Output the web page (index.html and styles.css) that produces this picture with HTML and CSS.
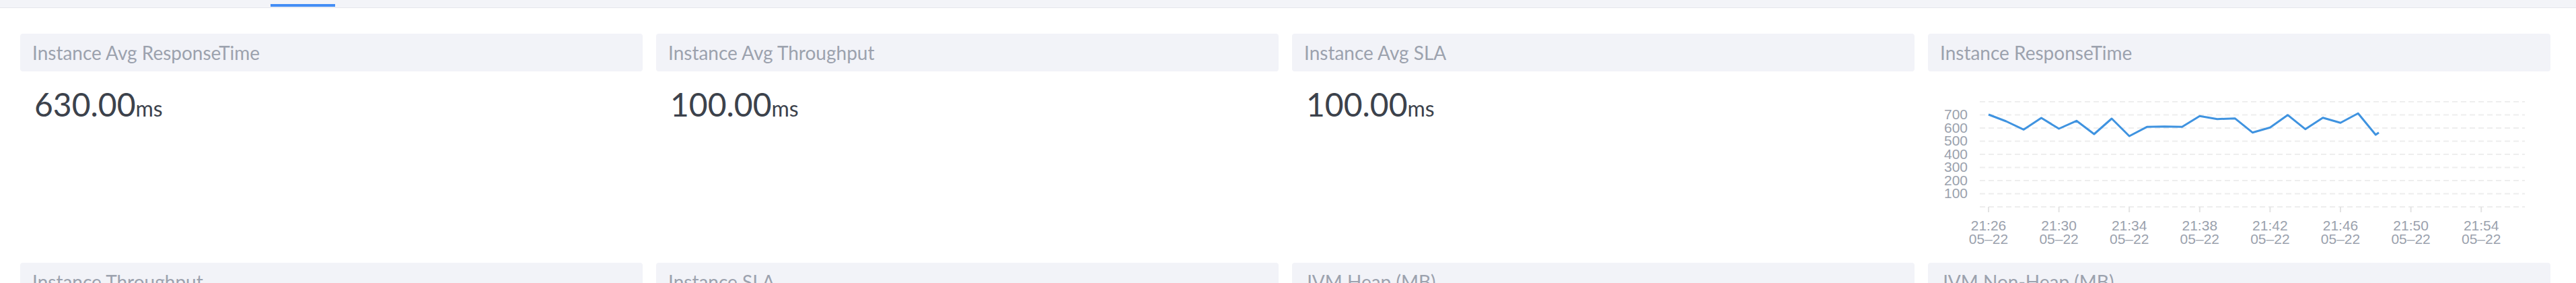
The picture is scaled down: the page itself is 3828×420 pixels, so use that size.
FILE: index.html
```html
<!DOCTYPE html>
<html lang="en">
<head>
<meta charset="utf-8">
<title>Instance Dashboard</title>
<link rel="stylesheet" href="styles.css">
</head>
<body>
<div class="tabbar">
  <div class="tab-indicator"></div>
</div>
<div class="grid">
  <section class="card">
    <header class="card-header">Instance Avg ResponseTime</header>
    <div class="card-body">
      <div class="value">630.00<span class="unit">ms</span></div>
    </div>
  </section>
  <section class="card">
    <header class="card-header">Instance Avg Throughput</header>
    <div class="card-body">
      <div class="value">100.00<span class="unit">ms</span></div>
    </div>
  </section>
  <section class="card">
    <header class="card-header">Instance Avg SLA</header>
    <div class="card-body">
      <div class="value">100.00<span class="unit">ms</span></div>
    </div>
  </section>
  <section class="card">
    <header class="card-header">Instance ResponseTime</header>
    <div class="card-body">
      <svg class="chart" width="925" height="264" viewBox="0 0 925 264">
        <g class="grid-lines">
          <line x1="77" y1="45" x2="887" y2="45"/>
          <line x1="77" y1="64.5" x2="887" y2="64.5"/>
          <line x1="77" y1="84" x2="887" y2="84"/>
          <line x1="77" y1="103.5" x2="887" y2="103.5"/>
          <line x1="77" y1="123" x2="887" y2="123"/>
          <line x1="77" y1="142.5" x2="887" y2="142.5"/>
          <line x1="77" y1="162" x2="887" y2="162"/>
          <line x1="77" y1="181.5" x2="887" y2="181.5"/>
          <line x1="77" y1="201" x2="887" y2="201"/>
        </g>
        <g class="ticks">
          <line x1="90" y1="201" x2="90" y2="209"/>
          <line x1="194.6" y1="201" x2="194.6" y2="209"/>
          <line x1="299.2" y1="201" x2="299.2" y2="209"/>
          <line x1="403.8" y1="201" x2="403.8" y2="209"/>
          <line x1="508.4" y1="201" x2="508.4" y2="209"/>
          <line x1="613" y1="201" x2="613" y2="209"/>
          <line x1="717.6" y1="201" x2="717.6" y2="209"/>
          <line x1="822.2" y1="201" x2="822.2" y2="209"/>
        </g>
        <g class="y-labels">
          <text x="59" y="71">700</text>
          <text x="59" y="90.5">600</text>
          <text x="59" y="110">500</text>
          <text x="59" y="129.5">400</text>
          <text x="59" y="149">300</text>
          <text x="59" y="168.5">200</text>
          <text x="59" y="188">100</text>
        </g>
        <g class="x-labels">
          <text x="90" y="235.5">21:26</text><text x="90" y="256.3">05–22</text>
          <text x="194.6" y="235.5">21:30</text><text x="194.6" y="256.3">05–22</text>
          <text x="299.2" y="235.5">21:34</text><text x="299.2" y="256.3">05–22</text>
          <text x="403.8" y="235.5">21:38</text><text x="403.8" y="256.3">05–22</text>
          <text x="508.4" y="235.5">21:42</text><text x="508.4" y="256.3">05–22</text>
          <text x="613" y="235.5">21:46</text><text x="613" y="256.3">05–22</text>
          <text x="717.6" y="235.5">21:50</text><text x="717.6" y="256.3">05–22</text>
          <text x="822.2" y="235.5">21:54</text><text x="822.2" y="256.3">05–22</text>
        </g>
        <polyline class="series" points="90,64 116.15,74 142.3,86.3 168.45,69 194.6,85 220.75,73.3 246.9,93 273.05,70 299.2,96 325.35,82.3 351.5,81.7 377.65,82.3 403.8,66.3 429.95,70.7 456.1,69.7 482.25,90.7 508.4,83.3 534.55,64.7 560.7,85.7 586.85,68.7 613,76.3 639.15,62.3 665.3,94 670,90.7"/>
      </svg>
    </div>
  </section>
  <section class="card">
    <header class="card-header">Instance Throughput</header>
    <div class="card-body"></div>
  </section>
  <section class="card">
    <header class="card-header">Instance SLA</header>
    <div class="card-body"></div>
  </section>
  <section class="card">
    <header class="card-header">JVM Heap (MB)</header>
    <div class="card-body"></div>
  </section>
  <section class="card">
    <header class="card-header">JVM Non-Heap (MB)</header>
    <div class="card-body"></div>
  </section>
</div>
</body>
</html>
```
FILE: styles.css
```css
html, body {
  margin: 0;
  padding: 0;
  background: #ffffff;
  font-family: Lato, "Noto Sans", sans-serif;
}

.tabbar {
  height: 11px;
  background: #f3f4f8;
  border-bottom: 1px solid #e5e7ec;
  display: flex;
  align-items: flex-start;
}

.tab-indicator {
  margin-left: 402px;
  margin-top: 6px;
  width: 96px;
  height: 4px;
  background: #448ef5;
}

.grid {
  display: grid;
  grid-template-columns: repeat(4, 945px);
  padding: 28px 0 0 20px;
}

.card {
  box-sizing: border-box;
  height: 340px;
  padding: 10px;
  display: flex;
  flex-direction: column;
}

.card-header {
  height: 56px;
  flex: none;
  box-sizing: border-box;
  display: flex;
  align-items: center;
  padding: 0 18px;
  background: #f2f3f8;
  border-radius: 4px;
  font-size: 28px;
  color: #9ca2ae;
  white-space: nowrap;
}

.card-body {
  flex: 1;
  overflow: hidden;
}

.value {
  padding: 20px 0 0 21px;
  font-size: 48px;
  color: #3c424c;
  line-height: normal;
}

.unit {
  font-size: 32px;
}

.chart {
  display: block;
}

.grid-lines line {
  stroke: #eeeeee;
  stroke-width: 2;
  stroke-dasharray: 8 5;
}

.ticks line {
  stroke: #e3e3e3;
  stroke-width: 2;
}

.y-labels text {
  font-family: "Liberation Sans", Arial, sans-serif;
  font-size: 21px;
  fill: #9aa1ad;
  text-anchor: end;
}

.x-labels text {
  font-family: "Liberation Sans", Arial, sans-serif;
  font-size: 21px;
  fill: #9aa1ad;
  text-anchor: middle;
}

.series {
  fill: none;
  stroke: #3f93e0;
  stroke-width: 3;
  stroke-linejoin: round;
}
```
